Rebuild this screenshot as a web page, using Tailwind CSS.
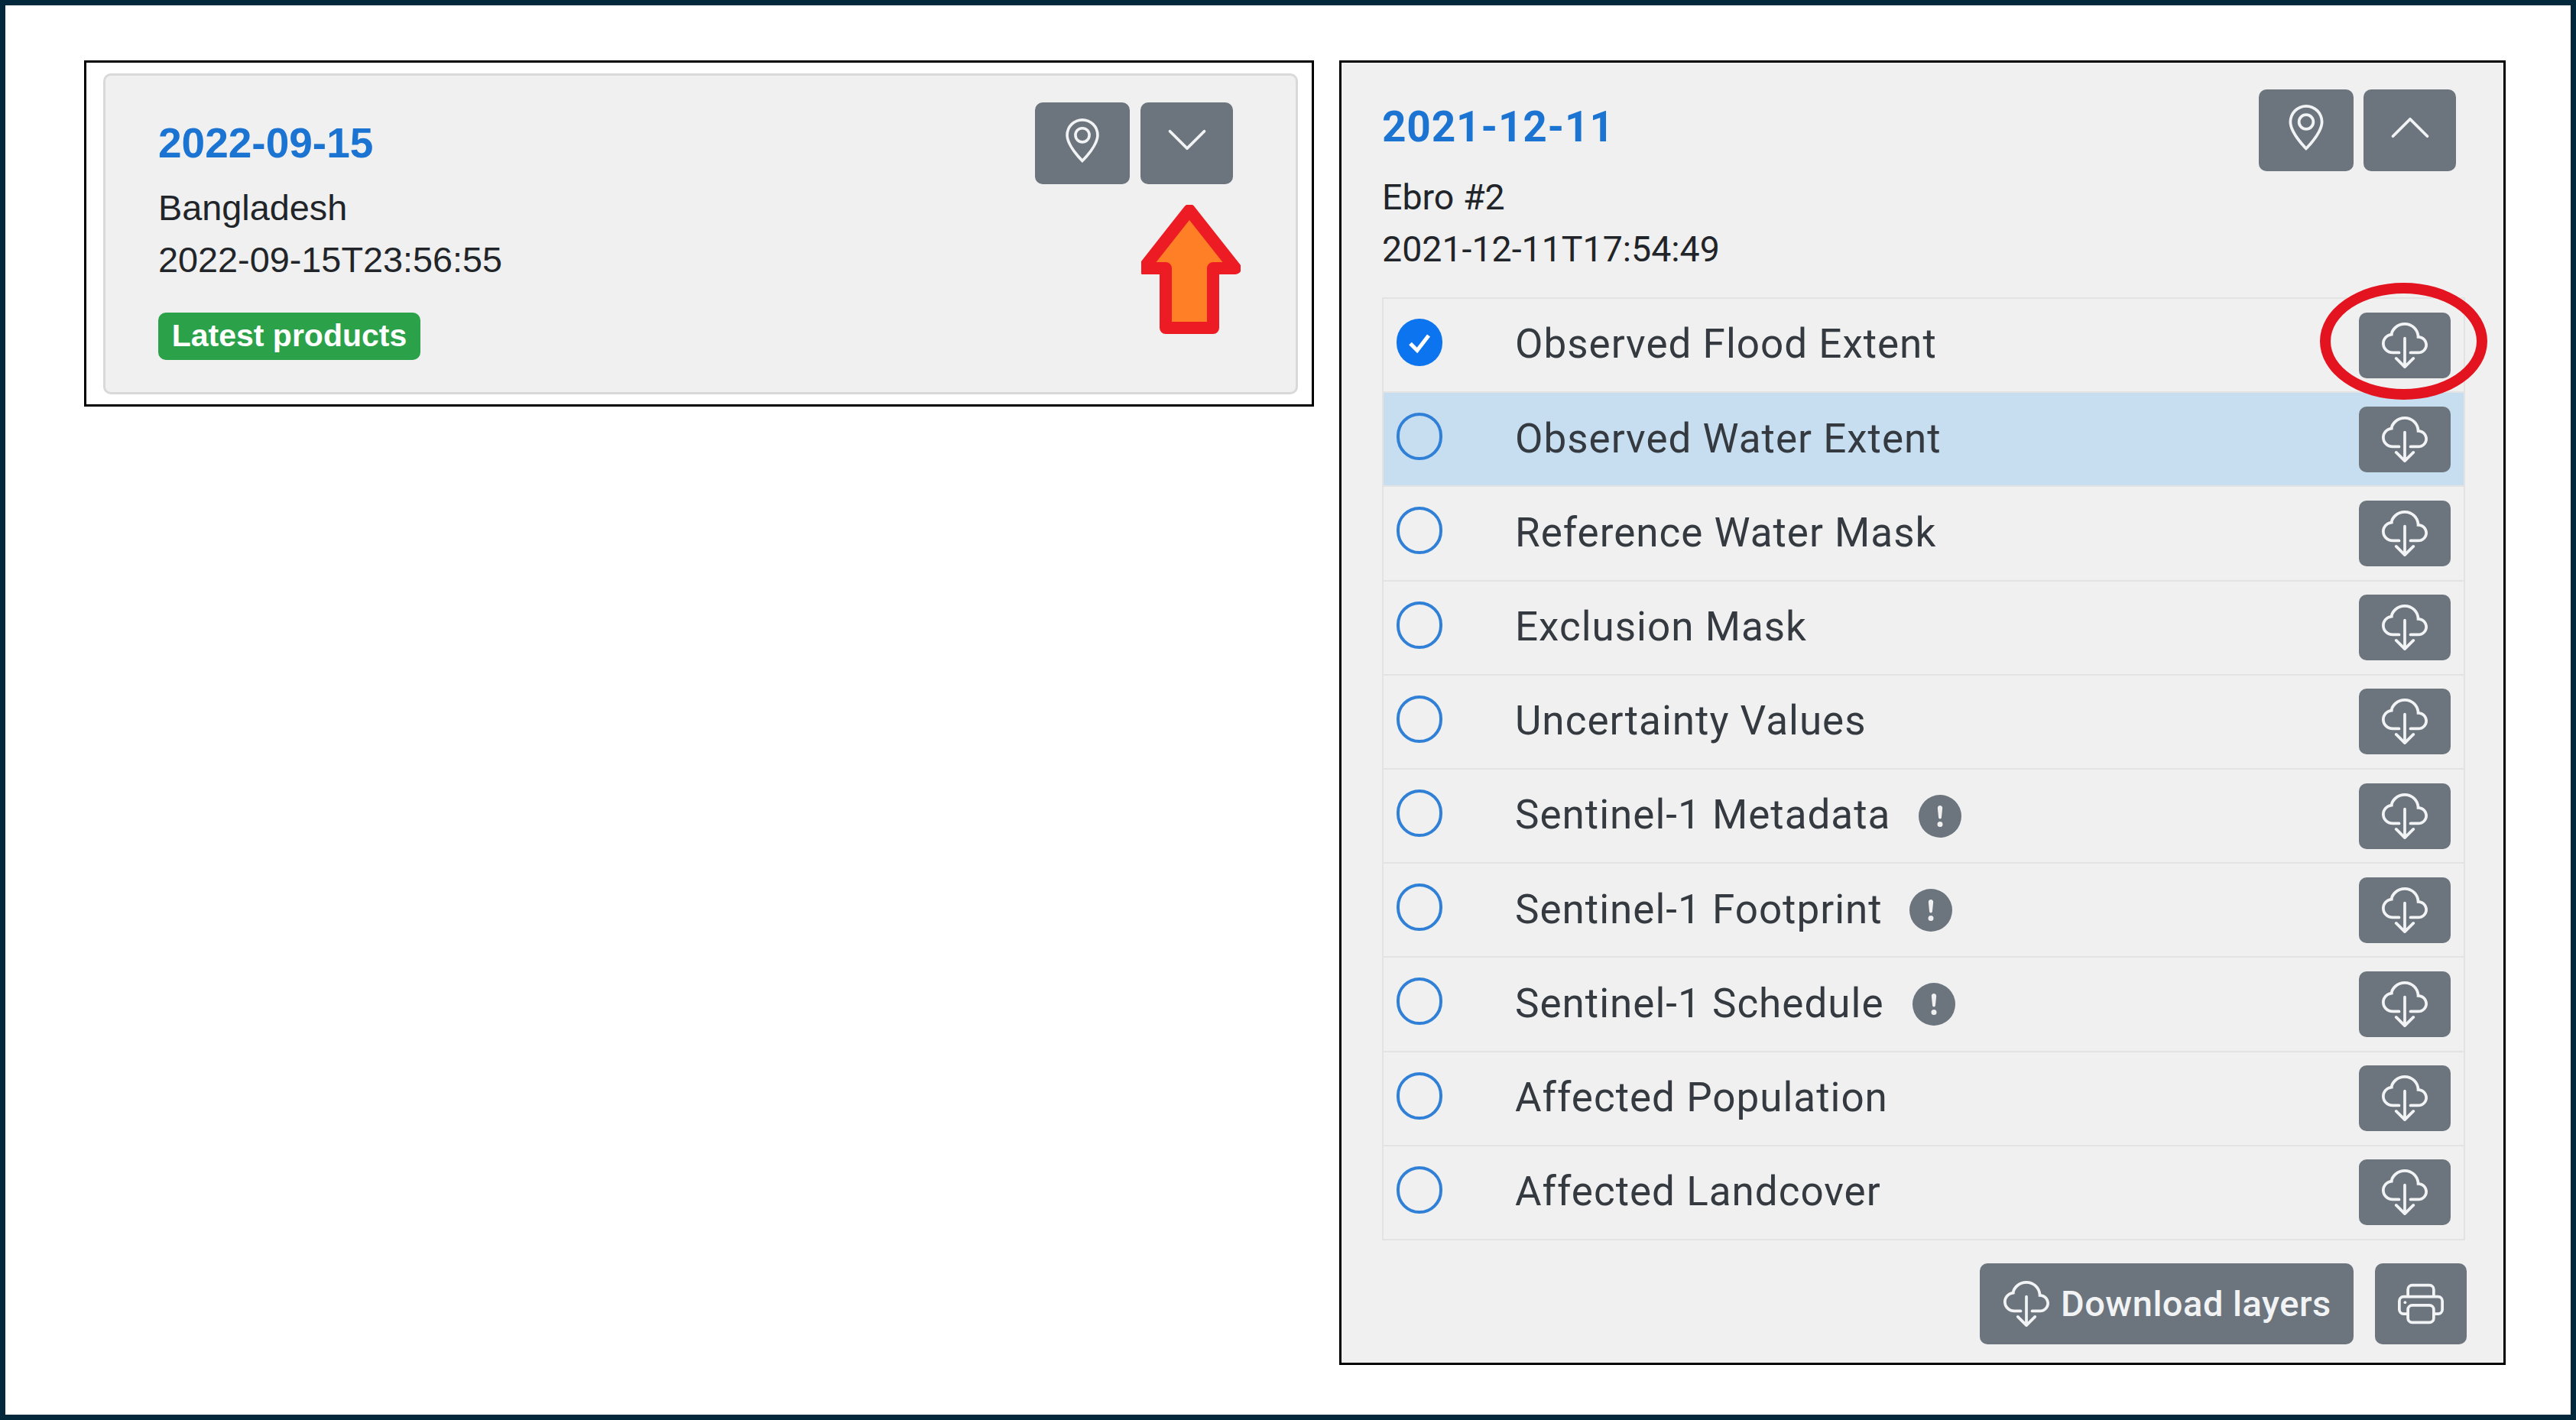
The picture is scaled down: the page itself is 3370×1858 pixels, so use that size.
<!DOCTYPE html>
<html lang="en">
<head>
    <meta charset="UTF-8">
    <title>Flood products</title>
    <script src="https://cdn.jsdelivr.net/npm/@tailwindcss/browser@4"></script>
</head>
<body class="bg-white">
    <!-- shared icons -->
    <svg class="hidden">
        <symbol id="pin" viewBox="0 0 16 16"><path d="M12.166 8.94c-.524 1.062-1.234 2.12-1.96 3.07A31.493 31.493 0 0 1 8 14.58a31.481 31.481 0 0 1-2.206-2.57c-.726-.95-1.436-2.008-1.96-3.07C3.304 7.867 3 6.862 3 6a5 5 0 0 1 10 0c0 .862-.305 1.867-.834 2.94zM8 16s6-5.686 6-10A6 6 0 0 0 2 6c0 4.314 6 10 6 10z"/><path d="M8 8a2 2 0 1 1 0-4 2 2 0 0 1 0 4zm0 1a3 3 0 1 0 0-6 3 3 0 0 0 0 6z"/></symbol>
        <symbol id="down" viewBox="0 0 16 16"><path fill-rule="evenodd" d="M1.646 4.646a.5.5 0 0 1 .708 0L8 10.293l5.646-5.647a.5.5 0 0 1 .708.708l-6 6a.5.5 0 0 1-.708 0l-6-6a.5.5 0 0 1 0-.708z"/></symbol>
        <symbol id="up" viewBox="0 0 16 16"><path fill-rule="evenodd" d="M7.646 4.646a.5.5 0 0 1 .708 0l6 6a.5.5 0 0 1-.708.708L8 5.707l-5.646 5.647a.5.5 0 0 1-.708-.708l6-6z"/></symbol>
        <symbol id="cloud" viewBox="0 0 16 16"><path d="M4.406 1.342A5.53 5.53 0 0 1 8 0c2.69 0 4.923 2 5.166 4.579C14.758 4.804 16 6.137 16 7.773 16 9.569 14.502 11 12.687 11H10a.5.5 0 0 1 0-1h2.688C13.979 10 15 8.988 15 7.773c0-1.216-1.02-2.228-2.313-2.228h-.5v-.5C12.188 2.825 10.328 1 8 1a4.53 4.53 0 0 0-2.941 1.1c-.757.652-1.153 1.438-1.153 2.055v.448l-.445.049C2.064 4.805 1 5.952 1 7.318 1 8.785 2.23 10 3.781 10H6a.5.5 0 0 1 0 1H3.781C1.708 11 0 9.366 0 7.318c0-1.763 1.266-3.223 2.942-3.593.143-.863.698-1.723 1.464-2.383z"/><path d="M7.646 15.854a.5.5 0 0 0 .708 0l3-3a.5.5 0 0 0-.708-.708L8.5 14.293V5.5a.5.5 0 0 0-1 0v8.793l-2.146-2.147a.5.5 0 0 0-.708.708l3 3z"/></symbol>
        <symbol id="printer" viewBox="0 0 16 16"><path d="M2.5 8a.5.5 0 1 0 0-1 .5.5 0 0 0 0 1z"/><path d="M5 1a2 2 0 0 0-2 2v2H2a2 2 0 0 0-2 2v3a2 2 0 0 0 2 2h1v1a2 2 0 0 0 2 2h6a2 2 0 0 0 2-2v-1h1a2 2 0 0 0 2-2V7a2 2 0 0 0-2-2h-1V3a2 2 0 0 0-2-2H5zM4 3a1 1 0 0 1 1-1h6a1 1 0 0 1 1 1v2H4V3zm1 5a2 2 0 0 0-2 2v1H2a1 1 0 0 1-1-1V7a1 1 0 0 1 1-1h12a1 1 0 0 1 1 1v3a1 1 0 0 1-1 1h-1v-1a2 2 0 0 0-2-2H5zm7 2v3a1 1 0 0 1-1 1H5a1 1 0 0 1-1-1v-3a1 1 0 0 1 1-1h6a1 1 0 0 1 1 1z"/></symbol>
        <symbol id="alert" viewBox="0 0 16 16"><path d="M16 8A8 8 0 1 1 0 8a8 8 0 0 1 16 0zM8 4a.905.905 0 0 0-.9.995l.35 3.507a.552.552 0 0 0 1.1 0l.35-3.507A.905.905 0 0 0 8 4zm.002 6a1 1 0 1 0 0 2 1 1 0 0 0 0-2z"/></symbol>
    </svg>

    <div class="w-[3370px] h-[1858px] border-[7px] border-[#04283b] flex items-start gap-[33px] pl-[103px] pt-[72px]">

        <!-- collapsed card -->
        <div class="relative w-[1609px] h-[453px] border-[3px] border-black bg-white pt-[14px] pl-[22px]">
            <div class="w-[1563px] h-[420px] rounded-[10px] border-[3px] border-[#d9d9d9] bg-[#f0f0f0] flex justify-between pl-[69px] pr-[82px] pt-[35px] font-['Liberation_Sans',sans-serif] text-[#212529]">
                <div class="pt-[18px]">
                    <div class="text-[55px] leading-[68px] font-bold text-[#1b74d2] pt-[1px] -mb-[1px]">2022-09-15</div>
                    <div class="text-[46.8px] leading-[68px] mt-[18px]">Bangladesh</div>
                    <div class="text-[46.8px] leading-[68px]">2022-09-15T23:56:55</div>
                    <div class="mt-[35px] w-[343px] h-[62px] rounded-[10px] bg-[#2ba24a] text-white text-[41px] font-bold flex items-center justify-center">Latest products</div>
                </div>
                <div class="flex gap-[14px]">
                    <div class="w-[124px] h-[107px] rounded-[10px] bg-[#6c757d] flex justify-center pt-[21px] text-[#f1f3f5]"><svg class="w-[58px] h-[58px] fill-current"><use href="#pin"/></svg></div>
                    <div class="w-[121px] h-[107px] rounded-[10px] bg-[#6c757d] flex justify-center pt-[19px] text-[#f1f3f5]"><svg class="w-[60px] h-[60px] fill-current"><use href="#down"/></svg></div>
                </div>
            </div>
            <!-- annotation arrow -->
            <svg class="absolute left-[1380px] top-[186px] w-[130px] h-[170px]" viewBox="1493 268 130 170">
                <path d="M1556 275 L1616 351 L1587 351 L1587 429 L1525 429 L1525 351 L1496 351 Z" fill="#ff7f27" stroke="#ed1c24" stroke-width="16" stroke-linejoin="round"/>
            </svg>
        </div>

        <!-- expanded card -->
        <div class="relative w-[1526px] h-[1707px] border-[3px] border-black bg-[#f0f0f0] px-[53px] pt-[50px] font-['Roboto',sans-serif] text-[#212529]">
            <div class="flex justify-between h-[228px]">
                <div>
                    <div class="text-[55px] leading-[68px] font-bold tracking-[0.8px] text-[#1b74d2]">2021-12-11</div>
                    <div class="text-[46.5px] leading-[68px] mt-[24px]">Ebro #2</div>
                    <div class="text-[46.5px] leading-[68px]">2021-12-11T17:54:49</div>
                </div>
                <div class="flex gap-[13px] mr-[9px] -mt-[15px]">
                    <div class="w-[124px] h-[107px] rounded-[10px] bg-[#6c757d] flex justify-center pt-[20px] text-[#f1f3f5]"><svg class="w-[60px] h-[60px] fill-current"><use href="#pin"/></svg></div>
                    <div class="w-[121px] h-[107px] rounded-[10px] bg-[#6c757d] flex justify-center pt-[20px] text-[#f1f3f5]"><svg class="w-[60px] h-[60px] fill-current"><use href="#up"/></svg></div>
                </div>
            </div>
            <div class="mt-[29px] -mr-[3px] h-[1234px] grid grid-rows-10 border-x-2 border-b-2 border-[#e3e3e3] text-[53px] text-[#343a40] tracking-[1px]">
                <div class="flex items-center border-t-2 border-[#e3e3e3] pl-[17px] pr-[17px]">
                    <span class="w-[60px] h-[62px] -mt-[7px] rounded-full bg-[#0b74ee] flex items-center justify-center"><svg class="w-[36px] h-[36px]" viewBox="0 0 24 24" fill="none" stroke="#fff" stroke-width="3.4"><path d="M4 13 L10 19 L20 6"/></svg></span>
                    <span class="ml-[95px] -mt-[1px]">Observed Flood Extent</span>
                    <span class="ml-auto w-[120px] h-[86px] rounded-[10px] bg-[#6c757d] flex items-center justify-center text-[#f1f3f5]"><svg class="w-[60px] h-[60px] fill-current"><use href="#cloud"/></svg></span>
                </div>
                <div class="flex items-center border-t-2 border-[#e3e3e3] bg-[#c7ddf0] pl-[17px] pr-[17px]">
                    <span class="w-[60px] h-[62px] -mt-[7px] rounded-full border-[4px] border-[#2f80d6]"></span>
                    <span class="ml-[95px] -mt-[1px]">Observed Water Extent</span>
                    <span class="ml-auto w-[120px] h-[86px] rounded-[10px] bg-[#6c757d] flex items-center justify-center text-[#f1f3f5]"><svg class="w-[60px] h-[60px] fill-current"><use href="#cloud"/></svg></span>
                </div>
                <div class="flex items-center border-t-2 border-[#e3e3e3] pl-[17px] pr-[17px]">
                    <span class="w-[60px] h-[62px] -mt-[7px] rounded-full border-[4px] border-[#2f80d6]"></span>
                    <span class="ml-[95px] -mt-[1px]">Reference Water Mask</span>
                    <span class="ml-auto w-[120px] h-[86px] rounded-[10px] bg-[#6c757d] flex items-center justify-center text-[#f1f3f5]"><svg class="w-[60px] h-[60px] fill-current"><use href="#cloud"/></svg></span>
                </div>
                <div class="flex items-center border-t-2 border-[#e3e3e3] pl-[17px] pr-[17px]">
                    <span class="w-[60px] h-[62px] -mt-[7px] rounded-full border-[4px] border-[#2f80d6]"></span>
                    <span class="ml-[95px] -mt-[1px]">Exclusion Mask</span>
                    <span class="ml-auto w-[120px] h-[86px] rounded-[10px] bg-[#6c757d] flex items-center justify-center text-[#f1f3f5]"><svg class="w-[60px] h-[60px] fill-current"><use href="#cloud"/></svg></span>
                </div>
                <div class="flex items-center border-t-2 border-[#e3e3e3] pl-[17px] pr-[17px]">
                    <span class="w-[60px] h-[62px] -mt-[7px] rounded-full border-[4px] border-[#2f80d6]"></span>
                    <span class="ml-[95px] -mt-[1px]">Uncertainty Values</span>
                    <span class="ml-auto w-[120px] h-[86px] rounded-[10px] bg-[#6c757d] flex items-center justify-center text-[#f1f3f5]"><svg class="w-[60px] h-[60px] fill-current"><use href="#cloud"/></svg></span>
                </div>
                <div class="flex items-center border-t-2 border-[#e3e3e3] pl-[17px] pr-[17px]">
                    <span class="w-[60px] h-[62px] -mt-[7px] rounded-full border-[4px] border-[#2f80d6]"></span>
                    <span class="ml-[95px] -mt-[1px]">Sentinel-1 Metadata</span>
                    <svg class="w-[56px] h-[56px] ml-[37px] fill-[#6c757d]"><use href="#alert"/></svg>
                    <span class="ml-auto w-[120px] h-[86px] rounded-[10px] bg-[#6c757d] flex items-center justify-center text-[#f1f3f5]"><svg class="w-[60px] h-[60px] fill-current"><use href="#cloud"/></svg></span>
                </div>
                <div class="flex items-center border-t-2 border-[#e3e3e3] pl-[17px] pr-[17px]">
                    <span class="w-[60px] h-[62px] -mt-[7px] rounded-full border-[4px] border-[#2f80d6]"></span>
                    <span class="ml-[95px] -mt-[1px]">Sentinel-1 Footprint</span>
                    <svg class="w-[56px] h-[56px] ml-[35px] fill-[#6c757d]"><use href="#alert"/></svg>
                    <span class="ml-auto w-[120px] h-[86px] rounded-[10px] bg-[#6c757d] flex items-center justify-center text-[#f1f3f5]"><svg class="w-[60px] h-[60px] fill-current"><use href="#cloud"/></svg></span>
                </div>
                <div class="flex items-center border-t-2 border-[#e3e3e3] pl-[17px] pr-[17px]">
                    <span class="w-[60px] h-[62px] -mt-[7px] rounded-full border-[4px] border-[#2f80d6]"></span>
                    <span class="ml-[95px] -mt-[1px]">Sentinel-1 Schedule</span>
                    <svg class="w-[56px] h-[56px] ml-[37px] fill-[#6c757d]"><use href="#alert"/></svg>
                    <span class="ml-auto w-[120px] h-[86px] rounded-[10px] bg-[#6c757d] flex items-center justify-center text-[#f1f3f5]"><svg class="w-[60px] h-[60px] fill-current"><use href="#cloud"/></svg></span>
                </div>
                <div class="flex items-center border-t-2 border-[#e3e3e3] pl-[17px] pr-[17px]">
                    <span class="w-[60px] h-[62px] -mt-[7px] rounded-full border-[4px] border-[#2f80d6]"></span>
                    <span class="ml-[95px] -mt-[1px]">Affected Population</span>
                    <span class="ml-auto w-[120px] h-[86px] rounded-[10px] bg-[#6c757d] flex items-center justify-center text-[#f1f3f5]"><svg class="w-[60px] h-[60px] fill-current"><use href="#cloud"/></svg></span>
                </div>
                <div class="flex items-center border-t-2 border-[#e3e3e3] pl-[17px] pr-[17px]">
                    <span class="w-[60px] h-[62px] -mt-[7px] rounded-full border-[4px] border-[#2f80d6]"></span>
                    <span class="ml-[95px] -mt-[1px]">Affected Landcover</span>
                    <span class="ml-auto w-[120px] h-[86px] rounded-[10px] bg-[#6c757d] flex items-center justify-center text-[#f1f3f5]"><svg class="w-[60px] h-[60px] fill-current"><use href="#cloud"/></svg></span>
                </div>
            </div>
            <div class="mt-[30px] flex justify-end gap-[28px] -mr-[5px]">
                <div class="w-[489px] h-[106px] rounded-[10px] bg-[#6c757d] flex items-center pl-[31px] text-[#f1f3f5] text-[47px] tracking-[0.5px] font-medium">
                    <svg class="w-[60px] h-[62px] fill-current"><use href="#cloud"/></svg>
                    <span class="ml-[15px]">Download layers</span>
                </div>
                <div class="w-[120px] h-[106px] rounded-[10px] bg-[#6c757d] flex items-center justify-center text-[#f1f3f5]"><svg class="w-[60px] h-[60px] fill-current"><use href="#printer"/></svg></div>
            </div>
            <!-- annotation ring -->
            <div class="absolute left-[1280px] top-[288px] w-[219px] h-[153px] rounded-[50%] border-[14px] border-[#e3131f]"></div>
        </div>
    </div>
</body>
</html>
